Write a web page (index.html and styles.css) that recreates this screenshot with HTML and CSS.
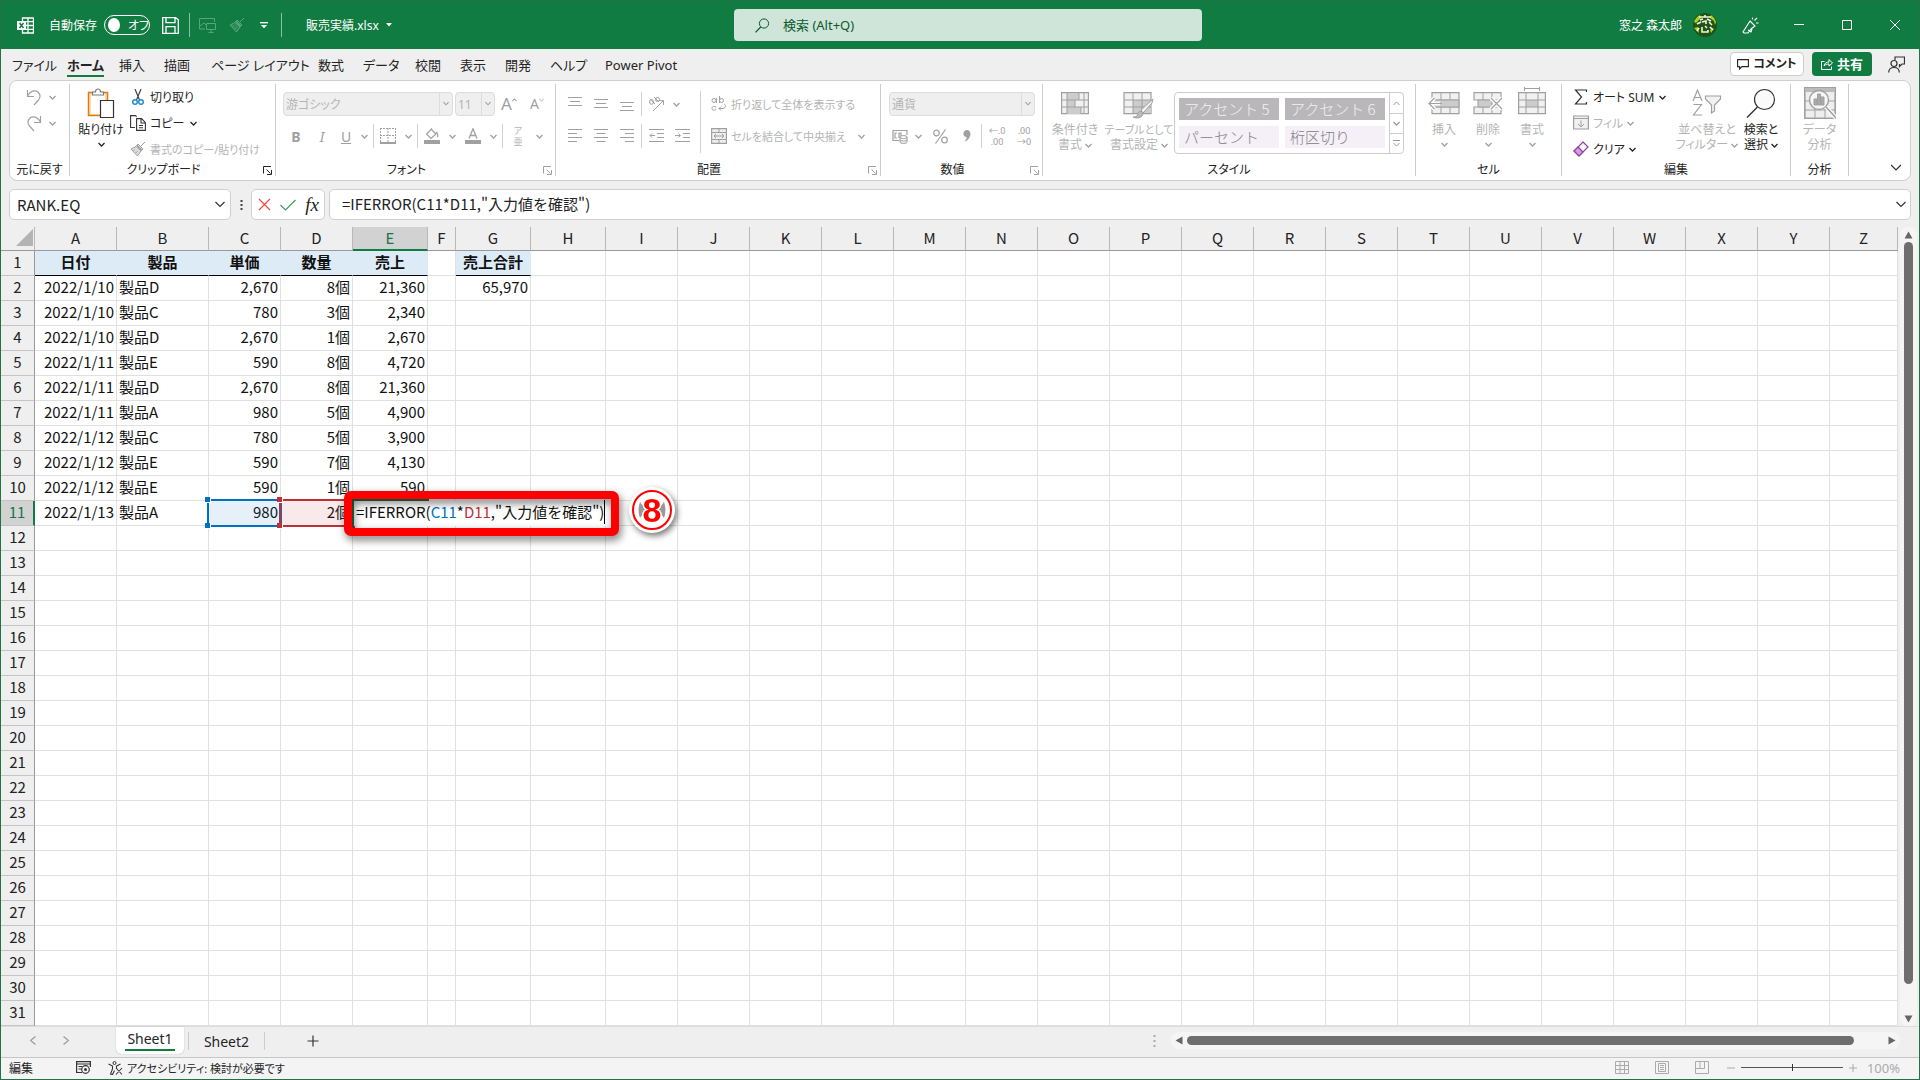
FILE: index.html
```html
<!DOCTYPE html>
<html lang="ja">
<head>
<meta charset="utf-8">
<title>販売実績.xlsx - Excel</title>
<link rel="stylesheet" href="styles.css">
</head>
<body>
<svg class="defs" aria-hidden="true">
  <symbol id="chev" viewBox="0 0 7 5"><path d="M.5 1l3 3 3-3" fill="none" stroke="currentColor" stroke-width="1.3"/></symbol>
  <symbol id="launch" viewBox="0 0 9 9"><path d="M.5 7.500V.5H8M3.500 3.500l4 4M8.500 4v4.500H4" fill="none" stroke="currentColor"/></symbol>
  <symbol id="brush" viewBox="0 0 16 16"><path d="M15 1l-4.500 4.500M7 4l5 5M8 3l5 5-1.500 1.500-5-5zM6 5.500L1 8l6.500 7 3.500-5z" fill="currentColor" fill-opacity=".35" stroke="currentColor"/><path d="M3.500 9.500l1.500-.5M5.500 12l2-1.500" stroke="currentColor"/></symbol>
</svg>

<header class="titlebar">
  <div class="quick">
    <svg class="logo" width="17" height="17" viewBox="0 0 17 17"><path d="M5.500 4V1h11v15h-11v-3M11 1v15M5.500 4.700h11M9 8.500h7.500M5.500 12.300h11" fill="none" stroke="#fff" stroke-width="1.300"/><path d="M0 4h9v9H0z" fill="#fff"/><path d="M2.500 6l4 5M6.500 6l-4 5" stroke="#107c41" stroke-width="1.500"/></svg>
    <label class="autosave"><span>自動保存</span><input type="checkbox" role="switch"><span class="switch"><i></i>オフ</span></label>
    <button class="tb save" aria-label="上書き保存"><svg width="17" height="17" viewBox="0 0 17 17"><path d="M.7.7h13l2.600 2v13.600H.7zM4 .7v5h9v-5M4 16V9.700h9V16" fill="none" stroke="#fff" stroke-width="1.300"/></svg></button>
    <i class="vline"></i>
    <button class="tb dim" aria-label="画面"><svg width="17" height="15" viewBox="0 0 17 15"><path d="M6 11H.5V.5h15V4M1 8l4-3 3 3M7.500 5.500h9v6h-9zM12 11.500v3M9.500 14.500h5" fill="none" stroke="currentColor"/></svg></button>
    <button class="tb dim" aria-label="書式のコピー"><svg width="16" height="16"><use href="#brush"/></svg></button>
    <button class="tb more" aria-label="クイック アクセスのカスタマイズ"><svg width="8" height="7" viewBox="0 0 8 7"><path d="M0 .7h8" stroke="#fff" stroke-width="1.300"/><path d="M.8 3h6.400L4 6.300z" fill="#fff"/></svg></button>
    <i class="vline"></i>
    <button class="filename">販売実績.xlsx <svg width="6" height="4" viewBox="0 0 6 4"><path d="M0 0h6L3 3.500z" fill="#fff"/></svg></button>
  </div>
  <label class="search">
    <svg width="15" height="15" viewBox="0 0 15 15"><circle cx="9" cy="5.500" r="4.600" fill="none" stroke="#0b5a2d"/><path d="M5.700 9L.5 14.300" stroke="#0b5a2d" stroke-width="1.200"/></svg>
    <input type="text" placeholder="検索 (Alt+Q)" aria-label="検索">
  </label>
  <div class="account">
    <span>窓之 森太郎</span>
    <svg class="avatar" width="24" height="24" viewBox="0 0 24 24"><circle cx="12" cy="12" r="12" fill="#1f5416"/><path d="M1 9a12 12 0 016-7l1 3-5 5zM23 9a12 12 0 00-5-7l-1 3 4 3 1 4zM1 15l4-1 1 6zM18 20l-1-3 4-2z" fill="#a4d320"/><path d="M6 4h12M12 2v2M7 7l3-1M14 6l4 2M4 11l4-2M9 9l4-1v3M16 9l3 3M6 15l-2 3M9 14v5h6v-2M12 13l2 2M17 14l3 3" fill="none" stroke="#f2f6dc" stroke-width="1.600"/></svg>
    <button class="wb pen" aria-label="新機能"><svg width="17" height="17" viewBox="0 0 17 17"><path d="M8 4l5 5-4 3-3 4H2l-1-1zM12.500 3.500L15 1M10.500 2.500V.5M14 6h2.500M6 13l3 2 1-3" fill="none" stroke="#fff" stroke-width="1.100"/></svg></button>
    <button class="wb" aria-label="最小化"><svg width="10" height="10"><path d="M0 4.500h10" stroke="#fff"/></svg></button>
    <button class="wb" aria-label="最大化"><svg width="10" height="10"><path d="M.5.500h9v9h-9z" fill="none" stroke="#fff"/></svg></button>
    <button class="wb" aria-label="閉じる"><svg width="10" height="10"><path d="M0 0l10 10M10 0L0 10" stroke="#fff"/></svg></button>
  </div>
</header>

<nav class="tabs">
  <a class="t55" href="#">ファイル</a><a class="t52 on" href="#"><b>ホーム</b></a><a class="t45" href="#">挿入</a><a class="t47" href="#">描画</a><a class="t107" href="#">ページ レイアウト</a><a class="t45" href="#">数式</a><a class="t52" href="#">データ</a><a class="t45" href="#">校閲</a><a class="t45" href="#">表示</a><a class="t45" href="#">開発</a><a class="t55" href="#">ヘルプ</a><a href="#">Power Pivot</a>
  <div class="tabs-right">
    <button class="comment"><svg width="12" height="11" viewBox="0 0 12 11"><path d="M.6.600h10.800v7H5L2.600 10V7.600h-2z" fill="none" stroke="#242424" stroke-width="1.100"/></svg>コメント</button>
    <button class="share"><svg width="12" height="12" viewBox="0 0 12 12"><path d="M3.500 3.500h-3v8h10v-3M3 8c.5-3 2.500-4 5-4V1.500L11.500 5 8 8V6C6 6 4.500 6.500 3 8z" fill="none" stroke="#fff"/></svg>共有</button>
    <button class="plain" aria-label="フィードバック"><svg width="17" height="17" viewBox="0 0 17 17"><path d="M7 4V1h9.500v7H14l-2.500 2.500V8" fill="none" stroke="#333" stroke-width="1.200"/><circle cx="6" cy="7.500" r="3" fill="none" stroke="#333" stroke-width="1.200"/><path d="M.7 16.500c0-3 2-5 5.300-5s5.300 2 5.300 5" fill="none" stroke="#333" stroke-width="1.200"/></svg></button>
  </div>
</nav>

<section class="ribbon">
  <div class="group g-undo">
    <div class="body stack">
      <button class="cmd off" aria-label="元に戻す"><svg width="16" height="17" viewBox="0 0 16 17"><path d="M1.500 1v6.500H8M1.500 7C4 2 9 .5 12 3c3 3 2 6 .5 8L8 16" fill="none" stroke="currentColor" stroke-width="1.200"/></svg><svg class="chev" width="7" height="5"><use href="#chev"/></svg></button>
      <button class="cmd off" aria-label="やり直し"><svg width="16" height="17" viewBox="0 0 16 17"><path d="M14.500 1v6.500H8M14.500 7C12 2 7 .5 4 3c-3 3-2 6-.5 8L8 16" fill="none" stroke="currentColor" stroke-width="1.200"/></svg><svg class="chev" width="7" height="5"><use href="#chev"/></svg></button>
    </div>
    <h2>元に戻す</h2>
  </div>

  <div class="group g-clip">
    <div class="body">
      <button class="big paste"><svg width="28" height="32" viewBox="0 0 28 32"><path d="M1.500 5.500h19v23h-19z" fill="#fbe2a5" stroke="#e07b14" stroke-width="1.500"/><path d="M4 7h14v20H4z" fill="#fff"/><path d="M5.500 8V5h3c0-2 1-3 2.500-3s2.500 1 2.500 3h3v3z" fill="#fff" stroke="#7b7b7b" stroke-width="1.200"/><path d="M13.500 13.500h13v17h-13z" fill="#fff" stroke="#333" stroke-width="1.200"/></svg><span>貼り付け</span><svg class="chev" width="7" height="5"><use href="#chev"/></svg></button>
      <div class="stack">
        <button class="cmd"><svg width="16" height="16" viewBox="0 0 16 16"><path d="M5 0l4.500 11M11 0L6.500 11" stroke="#444" stroke-width="1.200"/><circle cx="5" cy="13" r="2.300" fill="none" stroke="#1e8bcd" stroke-width="1.400"/><circle cx="11" cy="13" r="2.300" fill="none" stroke="#1e8bcd" stroke-width="1.400"/></svg>切り取り</button>
        <button class="cmd"><svg width="16" height="16" viewBox="0 0 16 16"><path d="M5 12.500H.6V.6h5l1 1M6.600 3.600h5l3.800 4v7.800H6.600zM11 4v4h4M9 10.500h4M9 12.800h4" fill="none" stroke="#333" stroke-width="1.100"/></svg><span class="w36">コピー</span><svg class="chev" width="7" height="5"><use href="#chev"/></svg></button>
        <button class="cmd off small"><svg width="16" height="16"><use href="#brush"/></svg>書式のコピー/貼り付け</button>
      </div>
    </div>
    <h2>クリップボード</h2><svg class="launch" width="9" height="9"><use href="#launch"/></svg>
  </div>

  <div class="group g-font off">
    <div class="body rows">
      <div class="row">
        <label class="combo c170"><select disabled aria-label="フォント"><option>游ゴシック</option></select><svg class="chev" width="7" height="5"><use href="#chev"/></svg></label>
        <label class="combo c40"><select disabled aria-label="サイズ"><option>11</option></select><svg class="chev" width="7" height="5"><use href="#chev"/></svg></label>
        <button class="b28 big-a">A<svg width="5" height="4" viewBox="0 0 7 5"><path d="M.5 4l3-3 3 3" fill="none" stroke="currentColor" stroke-width="1.500"/></svg></button>
        <button class="b28 small-a">A<svg width="5" height="4"><use href="#chev"/></svg></button>
      </div>
      <div class="row">
        <button class="b26"><b>B</b></button><button class="b26"><em>I</em></button><button class="b22"><u>U</u></button><button class="b15"><svg width="7" height="5"><use href="#chev"/></svg></button><i class="sep"></i>
        <button class="b26"><svg width="16" height="16" viewBox="0 0 16 16"><path d="M.5 0v15M8 0v15M15.500 0v15M0 .5h16M0 7.500h16" stroke="currentColor" stroke-dasharray="2 1"/><path d="M0 15h16" stroke="currentColor" stroke-width="2"/></svg></button><button class="b15"><svg width="7" height="5"><use href="#chev"/></svg></button><i class="sep"></i>
        <button class="b26"><svg width="16" height="16" viewBox="0 0 16 16"><path d="M8 .5L2.500 6 7 10.500 12 6 7 1M12 4c2 1 2 3 1.500 5" fill="none" stroke="currentColor" stroke-width="1.200"/><path d="M0 12h16v4H0z" fill="currentColor"/></svg></button><button class="b15"><svg width="7" height="5"><use href="#chev"/></svg></button>
        <button class="b26"><svg width="16" height="16" viewBox="0 0 16 16"><path d="M4 10.500L8 .8l4 9.700M5.300 7.500h5.400" fill="none" stroke="currentColor" stroke-width="1.300"/><path d="M0 12h16v4H0z" fill="currentColor"/></svg></button><button class="b15"><svg width="7" height="5"><use href="#chev"/></svg></button><i class="sep"></i>
        <button class="b28 ruby"><span>ア</span><span>亜</span></button><button class="b15"><svg width="7" height="5"><use href="#chev"/></svg></button>
      </div>
    </div>
    <h2>フォント</h2><svg class="launch" width="9" height="9"><use href="#launch"/></svg>
  </div>

  <div class="group g-align off">
    <div class="body">
      <div class="rows">
        <div class="row">
          <button class="b26"><svg width="14" height="16" viewBox="0 0 14 16"><path d="M0 1.500h14M2 5.500h10M0 9.500h14" stroke="currentColor"/></svg></button><button class="b26"><svg width="14" height="16" viewBox="0 0 14 16"><path d="M0 3.500h14M2 7.500h10M0 11.500h14" stroke="currentColor"/></svg></button><button class="b26"><svg width="14" height="16" viewBox="0 0 14 16"><path d="M0 6.500h14M2 10.500h10M0 14.500h14" stroke="currentColor"/></svg></button><i class="sep"></i>
          <button class="b26"><svg width="16" height="16" viewBox="0 0 16 16"><path d="M5 15L15 5M11 4.500h4.500V9" fill="none" stroke="currentColor"/><ellipse cx="3.500" cy="6" rx="2" ry="2.300" fill="none" stroke="currentColor"/><path d="M2.500 3L7 8M6 1l5 5" stroke="currentColor"/><circle cx="9.500" cy="3.500" r="2" fill="none" stroke="currentColor"/></svg></button><button class="b15"><svg width="7" height="5"><use href="#chev"/></svg></button>
        </div>
        <div class="row">
          <button class="b26"><svg width="14" height="14" viewBox="0 0 14 14"><path d="M0 .5h14M0 4.500h9M0 8.500h14M0 12.500h9" stroke="currentColor"/></svg></button><button class="b26"><svg width="14" height="14" viewBox="0 0 14 14"><path d="M0 .5h14M2.500 4.500h9M0 8.500h14M2.500 12.500h9" stroke="currentColor"/></svg></button><button class="b26"><svg width="14" height="14" viewBox="0 0 14 14"><path d="M0 .5h14M5 4.500h9M0 8.500h14M5 12.500h9" stroke="currentColor"/></svg></button><i class="sep"></i>
          <button class="b26"><svg width="15" height="14" viewBox="0 0 15 14"><path d="M0 .5h15M8 4.500h7M8 8.500h7M0 12.500h15M6 6.500H1M3 4.500l-2 2 2 2" fill="none" stroke="currentColor"/></svg></button><button class="b26"><svg width="15" height="14" viewBox="0 0 15 14"><path d="M0 .5h15M8 4.500h7M8 8.500h7M0 12.500h15M0 6.500h5M3.500 4.500l2 2-2 2" fill="none" stroke="currentColor"/></svg></button>
        </div>
      </div>
      <i class="tall"></i>
      <div class="rows">
        <button class="row wide"><svg width="16" height="16" viewBox="0 0 16 16"><circle cx="3" cy="4.500" r="2" fill="none" stroke="currentColor"/><path d="M5.500 2v5M8.500 0v7M5 11c-3-1.500-4 0-4 1.500s1.500 2.500 4 1M13 8c2 1 2 4-1 4.500H8M10 10.500l-2 2 2 2" fill="none" stroke="currentColor"/><circle cx="10.500" cy="4.500" r="2" fill="none" stroke="currentColor"/></svg><span>折り返して全体を表示する</span></button>
        <button class="row wide"><svg width="16" height="16" viewBox="0 0 16 16"><path d="M.5.5h15v15H.5z" fill="#eee" stroke="currentColor" stroke-width="1.300"/><path d="M1 4.500h14M1 11.500h14M8 1v3M8 12v3M3 8h10M5 6L3 8l2 2M11 6l2 2-2 2" fill="none" stroke="currentColor"/></svg><span>セルを結合して中央揃え</span><svg class="chev" width="7" height="5"><use href="#chev"/></svg></button>
      </div>
    </div>
    <h2>配置</h2><svg class="launch" width="9" height="9"><use href="#launch"/></svg>
  </div>

  <div class="group g-num off">
    <div class="body rows">
      <div class="row"><label class="combo c146"><select disabled aria-label="表示形式"><option>通貨</option></select><svg class="chev" width="7" height="5"><use href="#chev"/></svg></label></div>
      <div class="row">
        <button class="b22"><svg width="17" height="15" viewBox="0 0 17 15"><path d="M7 11.500H1v-10h14V6M5 4H3v5h2M7 9V4h2v3" fill="none" stroke="currentColor" stroke-width="1.200"/><path d="M8 8c0-2 7-2 7 0v5c0 2-7 2-7 0zM8 8c0 2 7 2 7 0M8 10.500c0 2 7 2 7 0" fill="#eee" stroke="currentColor"/></svg></button><button class="b15"><svg width="7" height="5"><use href="#chev"/></svg></button>
        <button class="b28"><svg width="15" height="15" viewBox="0 0 15 15"><path d="M12.500.5L2.500 14.500" stroke="currentColor" stroke-width="1.200"/><circle cx="3.500" cy="4" r="2.800" fill="none" stroke="currentColor" stroke-width="1.200"/><circle cx="11.500" cy="11" r="2.800" fill="none" stroke="currentColor" stroke-width="1.200"/></svg></button>
        <button class="b26"><svg width="8" height="12" viewBox="0 0 8 12"><path d="M4 0c5 0 5 9-3 12 2-2 3-4 2.500-5C-1 7-.5 0 4 0z" fill="currentColor"/></svg></button><i class="sep"></i>
        <button class="b28 dec"><span>←.0</span><span>.00</span></button><button class="b26 dec"><span>.00</span><span>→0</span></button>
      </div>
    </div>
    <h2>数値</h2><svg class="launch" width="9" height="9"><use href="#launch"/></svg>
  </div>

  <div class="group g-style">
    <div class="body">
      <button class="big off b64"><svg width="28" height="32" viewBox="0 0 28 32"><path d="M.6 5.600h26.800v21H.6z" fill="#f1f1f1" stroke="currentColor" stroke-width="1.200"/><path d="M6 6h12v7H6zM6 13h8v7H6zM6 20h14v7H6z" fill="#ccc"/><path d="M6 6v21M18 6v7M14 13v7M20 20v7M23 6v21M1 13h26M1 20h26" stroke="currentColor"/></svg><span>条件付き</span><span>書式 <svg class="chev" width="7" height="5"><use href="#chev"/></svg></span></button>
      <button class="big off b64"><svg width="32" height="32" viewBox="0 0 32 32"><path d="M1 5.600h27v21H1z" fill="#f1f1f1" stroke="currentColor" stroke-width="1.200"/><path d="M10 13h18v13H10z" fill="#ccc"/><path d="M10 6v21M19 6v21M1 13h27M1 20h27" stroke="currentColor"/><path d="M30 12L18 23l2 3 9-10z" fill="#f4f4f4" stroke="currentColor"/><path d="M18 24c-3 0-3 3-4 5-1 1-3 1-4 1 4 2 10 1 10-4z" fill="#bbb" stroke="currentColor"/></svg><span class="small">テーブルとして</span><span>書式設定 <svg class="chev" width="7" height="5"><use href="#chev"/></svg></span></button>
      <div class="gallery">
        <div class="swatches"><button class="dark">アクセント 5</button><button class="dark">アクセント 6</button><button class="pale">パーセント</button><button class="pale">桁区切り</button></div>
        <div class="gscroll"><button aria-label="前"><svg width="7" height="5" viewBox="0 0 7 5"><path d="M.5 4l3-3 3 3" fill="none" stroke="currentColor"/></svg></button><button aria-label="次"><svg width="7" height="5"><use href="#chev"/></svg></button><button aria-label="その他"><svg width="7" height="7" viewBox="0 0 7 7"><path d="M0 .5h7M.5 3l3 3 3-3" fill="none" stroke="currentColor"/></svg></button></div>
      </div>
    </div>
    <h2>スタイル</h2>
  </div>

  <div class="group g-cell">
    <div class="body">
      <button class="big off b44"><svg width="32" height="32" viewBox="0 0 32 32"><path d="M4 5.600h27v21H4z" fill="#f1f1f1" stroke="currentColor" stroke-width="1.200"/><path d="M4 13h27M4 20h27M13 6v21M22 6v21" stroke="currentColor"/><path d="M2 13h29v7H2z" fill="#ccc" stroke="currentColor"/><path d="M12 16.500H2M6.500 11L1 16.500 6.500 22" fill="none" stroke="#fff" stroke-width="4"/><path d="M14 16.500H1M6.500 11L1 16.500 6.500 22" fill="none" stroke="currentColor" stroke-width="1.200"/></svg><span>挿入</span><svg class="chev" width="7" height="5"><use href="#chev"/></svg></button>
      <button class="big off b44"><svg width="30" height="32" viewBox="0 0 30 32"><path d="M1 5.600h27V13H1zM1 20h27v6.600H1z" fill="#f1f1f1" stroke="currentColor" stroke-width="1.200"/><path d="M10 6v21M19 6v21" stroke="currentColor"/><path d="M5 13h14v7H5z" fill="#ccc" stroke="currentColor"/><path d="M18 11l11 11M29 11L18 22" stroke="#fff" stroke-width="4"/><path d="M18 11l11 11M29 11L18 22" stroke="currentColor" stroke-width="1.200"/></svg><span>削除</span><svg class="chev" width="7" height="5"><use href="#chev"/></svg></button>
      <button class="big off b44"><svg width="28" height="32" viewBox="0 0 28 32"><path d="M.6 5.600h26.800v21H.6z" fill="#f1f1f1" stroke="currentColor" stroke-width="1.200"/><path d="M8 13h12v7H8z" fill="#ccc"/><path d="M8 6v21M20 6v21M1 13h26M1 20h26M6.500 0v4M21.500 0v4M7 1.500h14" stroke="currentColor"/></svg><span>書式</span><svg class="chev" width="7" height="5"><use href="#chev"/></svg></button>
    </div>
    <h2>セル</h2>
  </div>

  <div class="group g-edit">
    <div class="body">
      <div class="stack">
        <button class="cmd"><svg width="16" height="16" viewBox="0 0 16 16"><path d="M13.500 3V1H2.500l6 7-6 7h11v-2" fill="none" stroke="#333" stroke-width="1.200"/></svg><span class="w70">オート SUM</span><svg class="chev" width="7" height="5"><use href="#chev"/></svg></button>
        <button class="cmd off"><svg width="16" height="16" viewBox="0 0 16 16"><path d="M.6 1h14.800v13H.6z" fill="#f1f1f1" stroke="currentColor" stroke-width="1.200"/><path d="M1 3.500h14M8 5.500v6M5 9l3 3 3-3" fill="none" stroke="currentColor"/></svg>フィル<svg class="chev" width="7" height="5"><use href="#chev"/></svg></button>
        <button class="cmd"><svg width="16" height="16" viewBox="0 0 16 16"><path d="M10 1l5 5-9 9-5-5z" fill="#fff" stroke="#8f3fa0" stroke-width="1.200"/><path d="M5 6l5 5-4 4-5-5z" fill="#d69be0" stroke="#8f3fa0" stroke-width="1.200"/></svg><span class="clear">クリア</span><svg class="chev" width="7" height="5"><use href="#chev"/></svg></button>
      </div>
      <button class="big off b58"><svg width="30" height="32" viewBox="0 0 30 32"><path d="M1 14L5.500 3 10 14M2.500 10.500h6M1.500 17.500h8L1.500 28h8.500" fill="none" stroke="currentColor" stroke-width="1.200"/><path d="M13.500 9h15v3l-6 6v6l-3 2v-8l-6-6z" fill="#f1f1f1" stroke="currentColor" stroke-width="1.200"/></svg><span>並べ替えと</span><span>フィルター <svg class="chev" width="7" height="5"><use href="#chev"/></svg></span></button>
      <button class="big b50"><svg width="30" height="32" viewBox="0 0 30 32"><circle cx="18.500" cy="12.500" r="10" fill="#fafafa" stroke="#333" stroke-width="1.200"/><path d="M11.500 20L1 30.500" stroke="#333" stroke-width="1.500"/></svg><span>検索と</span><span>選択 <svg class="chev" width="7" height="5"><use href="#chev"/></svg></span></button>
    </div>
    <h2>編集</h2>
  </div>

  <div class="group g-data">
    <div class="body">
      <button class="big off b57"><svg width="32" height="32" viewBox="0 0 32 32"><path d="M.8.800h30.400v30.400H.8z" fill="#eee" stroke="currentColor" stroke-width="1.600"/><path d="M1 1h30v4H1z" fill="#bbb"/><path d="M1 14h30M1 23h30M11 22v9M21 22v9" stroke="currentColor"/><circle cx="15" cy="13" r="9.500" fill="#f6f6f6" stroke="currentColor" stroke-width="1.400"/><path d="M10 12h3v6h-3zM13.500 7h3v11h-3zM17 10h3v8h-3z" fill="#aaa" stroke="currentColor"/><path d="M22 20l10 11" stroke="#fff" stroke-width="4"/><path d="M22 20l10 11" stroke="currentColor" stroke-width="1.600"/></svg><span>データ</span><span>分析</span></button>
    </div>
    <h2>分析</h2>
  </div>
  <button class="collapse" aria-label="リボンを折りたたむ"><svg width="10" height="7" viewBox="0 0 7 5"><path d="M0 .7l3.500 3.500L7 .7" fill="none" stroke="#333" stroke-width=".9"/></svg></button>
</section>

<section class="formulabar">
  <div class="namebox"><input type="text" value="RANK.EQ" aria-label="名前ボックス"><svg width="10" height="7" viewBox="0 0 10 7"><path d="M.5 1L5 5.500 9.500 1" fill="none" stroke="#333" stroke-width="1.200"/></svg></div>
  <svg class="dots" width="3" height="12"><path d="M1.500 1v11" stroke="#444" stroke-width="2" stroke-dasharray="2 2"/></svg>
  <div class="fx"><button aria-label="キャンセル"><svg width="13" height="13"><path d="M1 1l11 11M12 1L1 12" stroke="#ee4a44" stroke-width="1.200"/></svg></button><button aria-label="入力"><svg width="16" height="12"><path d="M.5 6L5.500 11 15.500 1" fill="none" stroke="#3f9a5b" stroke-width="1.200"/></svg></button><button class="fxb" aria-label="関数の挿入"><em>fx</em></button></div>
  <div class="formula"><input type="text" value="=IFERROR(C11*D11,&quot;入力値を確認&quot;)" aria-label="数式バー"><svg width="10" height="7" viewBox="0 0 10 7"><path d="M.5 1L5 5.500 9.500 1" fill="none" stroke="#333" stroke-width="1.200"/></svg></div>
</section>

<main class="sheet">
  <div class="viewport"><table class="grid" id="grid"></table></div>
  <div class="vscroll"><svg width="11" height="8"><path d="M1.500 7.500L5.500.500l4 7z" fill="#666"/></svg><i></i><svg width="11" height="8"><path d="M1.500.500L5.500 7.500l4-7z" fill="#666"/></svg></div>
</main>

<footer>
  <div class="sheetbar">
    <button class="nav" aria-label="前のシート"><svg width="6" height="9"><path d="M5.500.500l-5 4 5 4" fill="none" stroke="#999" stroke-width="1.200"/></svg></button>
    <button class="nav" aria-label="次のシート"><svg width="6" height="9"><path d="M.5.500l5 4-5 4" fill="none" stroke="#999" stroke-width="1.200"/></svg></button>
    <a class="stab active" href="#"><span>Sheet1</span></a>
    <a class="stab" href="#">Sheet2</a>
    <button class="add" aria-label="新しいシート"><svg width="12" height="12"><path d="M6 .5v11M.5 6h11" stroke="#333" stroke-width="1.200"/></svg></button>
    <svg class="grip" width="3" height="12"><path d="M1.500 0v12" stroke="#aaa" stroke-width="2" stroke-dasharray="2 3"/></svg>
    <div class="hscroll"><svg width="8" height="11"><path d="M7.500 1.500L.5 5.500l7 4z" fill="#666"/></svg><i></i><svg width="8" height="11"><path d="M.5 1.500l7 4-7 4z" fill="#666"/></svg></div>
  </div>
  <div class="status">
    <span class="mode">編集</span>
    <svg width="15" height="13" viewBox="0 0 15 13"><path d="M6 11.500H.6V.6h13.800V6M.6 3h13.800M2.500 5.500h4M2.500 8h3" fill="none" stroke="#333" stroke-width="1.200"/><circle cx="9.500" cy="8.500" r="3.800" fill="none" stroke="#333" stroke-width="1.200"/><circle cx="9.500" cy="8.500" r="1.500" fill="#333"/></svg>
    <button class="access"><svg width="15" height="14" viewBox="0 0 15 14"><circle cx="6.500" cy="2" r="1.500" fill="none" stroke="#333"/><path d="M.5 3l4 2v3l-2 5 2 .5 2-4M12.500 3l-4 2v3M8 7l6 6.500M14 7l-6 6.500" fill="none" stroke="#333" stroke-width="1.100"/></svg>アクセシビリティ: 検討が必要です</button>
    <div class="views">
      <button aria-label="標準"><svg width="14" height="13"><path d="M.5.500h13v12H.5zM5 .5v12M9.500.500v12M.5 4.500h13M.5 8.500h13" fill="none" stroke="#aaa"/></svg></button>
      <button aria-label="ページ レイアウト"><svg width="14" height="13"><path d="M.5.500h13v12H.5zM3.500 2.500h7v8h-7zM5 4.500h4M5 6.500h4M5 8.500h4" fill="none" stroke="#aaa"/></svg></button>
      <button aria-label="改ページ"><svg width="14" height="13"><path d="M.5.500h13v12H.5zM.5 7.500h9v-7M5 .5v7" fill="none" stroke="#aaa"/></svg></button>
    </div>
    <button class="zoombtn" aria-label="縮小"><svg width="8" height="8"><path d="M0 4h8" stroke="#aaa"/></svg></button>
    <input class="zoom" type="range" min="0" max="100" value="50" aria-label="ズーム">
    <button class="zoombtn" aria-label="拡大"><svg width="8" height="8"><path d="M0 4h8M4 0v8" stroke="#aaa"/></svg></button>
    <span class="pctv">100%</span>
  </div>
</footer>
<script src="script.js"></script>
</body>
</html>
```
FILE: styles.css
```css
* { box-sizing: border-box; }
html, body { height: 100%; }
body {
  margin: 0; display: flex; flex-direction: column; overflow: hidden;
  background: #efefef; color: #242424;
  border: 1px solid #217346; border-top-width: 0;
  font-family: "Noto Sans", "Noto Sans CJK JP", sans-serif; font-size: 12px;
}
button, input, select { font: inherit; color: inherit; border: 0; background: none; padding: 0; margin: 0; font-feature-settings: inherit; }
button { display: flex; align-items: center; justify-content: center; white-space: nowrap; }
a { color: inherit; text-decoration: none; }
svg { flex: none; display: block; }
.defs { position: absolute; width: 0; height: 0; }
.titlebar, .tabs, .ribbon, .status { font-feature-settings: "palt"; }

/* title bar */
.titlebar { display: grid; grid-template-columns: minmax(0, 1fr) 484px minmax(0, 1fr); align-items: center; height: 49px; flex: none; background: #107c41; color: #fff; border-top: 1px solid #217346; }
.quick, .account { display: flex; align-items: center; }
.quick { padding-left: 16px; white-space: nowrap; }
.autosave { display: flex; align-items: center; gap: 7px; margin-left: 15px; }
.autosave input { position: absolute; opacity: 0; }
.switch { display: flex; align-items: center; gap: 8px; width: 46px; height: 20px; padding-left: 3px; border: 1px solid #fff; border-radius: 10px; }
.switch i { width: 14px; height: 14px; border-radius: 50%; background: #fff; }
.tb { width: 30px; height: 30px; }
.save { margin: 0 4px 0 5px; }
.more { width: 24px; }
.dim { color: #58a57a; }
.vline { width: 1px; height: 24px; background: #8cc0a2; }
.vline + .dim { margin-left: 2px; }
.tb + .vline { margin-left: 5px; }
.save + .vline { margin-left: 0; }
.filename { gap: 7px; margin-left: 24px; }
.search { display: flex; align-items: center; gap: 13px; height: 32px; margin-left: 16px; padding-left: 21px; border-radius: 4px; background: #cfe5d9; }
.search input { flex: 1; min-width: 0; outline: 0; font-size: 13px; }
.search input::placeholder { color: #0b5a2d; opacity: 1; }
.account { justify-content: flex-end; }
.avatar { margin: 0 8px 0 11px; }
.wb { width: 48px; height: 40px; }
.pen { width: 50px; }

/* ribbon tabs */
.tabs { display: flex; align-items: flex-start; height: 31px; flex: none; padding-left: 11px; font-size: 13px; line-height: 26px; }
.tabs a { padding-top: 3px; white-space: nowrap; }
.on b { display: inline-block; height: 25px; border-bottom: 2px solid #107c41; }
.t45 { width: 45px; } .t47 { width: 47px; } .t52 { width: 52px; } .t55 { width: 55px; } .t107 { width: 107px; }
.tabs-right { display: flex; align-items: center; gap: 8px; margin: 3px 7px 0 auto; line-height: 20px; font-weight: 700; }
.comment, .share { height: 24px; border-radius: 4px; font-weight: 700; gap: 4px; font-size: 12px; }
.comment { width: 74px; border: 1px solid #ccc; background: #fff; }
.share { width: 60px; background: #107c41; color: #fff; font-size: 13px; }
.plain { width: 32px; }

/* ribbon */
.ribbon { display: flex; flex: none; height: 101px; margin: 0 8px; background: #fff; border: 1px solid #cfcfcf; border-radius: 8px; overflow: hidden; }
.group { position: relative; flex: none; margin: 3px 0 4px; border-right: 1px solid #ccc; }
.body { display: flex; height: 79px; }
.group h2 { margin: 0; font-size: 12px; font-weight: 400; line-height: 14px; text-align: center; color: #242424; white-space: nowrap; }
.g-clip h2, .g-font h2, .g-align h2, .g-num h2 { padding-right: 18px; }
.launch { position: absolute; right: 3px; bottom: 1px; }
.off { color: #a0a0a0; }
.off span, .cmd.off, .off select { color: #b4b4b4; }
.off.cmd svg, .off span .chev { color: #a0a0a0; }
.small { font-size: 11px; }
.stack { display: flex; flex-direction: column; }
.cmd { display: flex; align-items: center; justify-content: flex-start; gap: 4px; height: 26px; white-space: nowrap; }
.w36 { width: 36px; text-align: left; } .w70 { width: 70px; text-align: left; }
.big { flex-direction: column; justify-content: flex-start; padding-top: 3px; line-height: 15px; }
.big > svg:first-child { margin-bottom: 3px; }
.big span .chev { display: inline-block; vertical-align: middle; }
.big > .chev { margin-top: 5px; }
.b44 { width: 44px; } .b50 { width: 50px; } .b57 { width: 57px; } .b58 { width: 58px; } .b64 { width: 64px; }
.rows { display: flex; flex-direction: column; gap: 8px; padding-top: 8px; }
.row { display: flex; align-items: center; height: 24px; }
.b15 { width: 15px; } .b22 { width: 22px; } .b26 { width: 26px; } .b28 { width: 28px; }
.row button { height: 24px; flex: none; font-size: 14px; }
.row .sep { width: 1px; height: 24px; margin: 0 1px; background: #d0d0d0; flex: none; }
.tall { width: 1px; height: 62px; margin: 7px 10px 0 5px; background: #d0d0d0; }
.row.wide { justify-content: flex-start; gap: 4px; font-size: 11px; }
.wide .chev { margin-left: 8px; }
.combo { display: flex; height: 24px; border: 1px solid #dcdcdc; border-radius: 4px; background: #efefef; align-items: stretch; }
.combo select { flex: 1; min-width: 0; appearance: none; opacity: 1; padding-left: 2px; }
.combo .chev { width: 13px; height: 22px; padding: 8px 3px 9px; border-left: 1px solid #dcdcdc; }
.c170 { width: 170px; margin-right: 2px; } .c40 { width: 40px; } .c146 { width: 146px; }
.row .big-a, .row .small-a { align-items: flex-start; }
.row .big-a { font-size: 17px; line-height: 24px; } .row .small-a { font-size: 14px; line-height: 24px; }
.big-a svg, .small-a svg { margin-top: 6px; }
.row .ruby, .row .dec { flex-direction: column; font-size: 9px; line-height: 11px; }
.dec span { color: #a0a0a0; }

.g-undo { width: 60px; }
.g-undo .cmd { padding-left: 16px; gap: 7px; }
.g-clip { width: 206px; }
.paste { width: 48px; margin: 0 5px 0 7px; }
.g-font { width: 280px; } .g-font .body { padding-left: 7px; }
.g-align { width: 325px; } .g-align .body { padding-left: 6px; }
.g-num { width: 162px; } .g-num .body { padding-left: 8px; }
.g-style { width: 373px; }
.g-cell { width: 146px; } .g-cell .body { padding-left: 6px; }
.g-edit { width: 229px; } .g-edit .stack { width: 104px; padding-left: 11px; margin-right: 12px; }
.clear { color: #242424; }
.g-data { width: 58px; }
.collapse { margin: 78px 6px 0 auto; width: 16px; height: 16px; }

.gallery { display: flex; width: 230px; height: 62px; margin: 8px 0 0 3px; border: 1px solid #ccc; border-radius: 4px; }
.swatches { display: grid; grid-template-columns: 100px 100px; grid-auto-rows: 22px; gap: 6px; padding: 5px 4px; }
.swatches button { justify-content: flex-start; padding-left: 5px; font-size: 15px; font-weight: 300; line-height: 22px; font-feature-settings: normal; font-family: "Noto Sans CJK JP", sans-serif; }
.swatches .dark { background: #bab7ba; color: #f2f2f2; }
.swatches .pale { background: #f5f0f7; color: #808080; }
.gscroll { display: grid; grid-template-rows: 1fr 1fr 1fr; flex: 1; border-left: 1px solid #ccc; color: #999; }
.gscroll button + button { border-top: 1px solid #ccc; }

/* formula bar */
.formulabar { display: flex; align-items: center; flex: none; padding: 8px 8px 7px; height: 46px; font-family: "Noto Sans CJK JP", sans-serif; font-size: 15px; }
.namebox, .fx, .formula { display: flex; align-items: center; height: 31px; border: 1px solid #d0d0d0; border-radius: 5px; background: #fff; }
.namebox { width: 222px; padding: 0 5px 0 7px; }
.namebox input, .formula input { flex: 1; min-width: 0; outline: 0; color: #222; }
.formula input { padding-bottom: 3px; }
.dots { margin: 0 8px 0 9px; }
.fx { width: 74px; }
.fx button { flex: 1; height: 29px; }
.fx .fxb { font: 400 19px "Liberation Serif", serif; color: #222; }
.formula { flex: 1; margin-left: 4px; padding: 0 4px 0 12px; }

/* worksheet */
.sheet { display: flex; flex: 1; min-height: 0; }
.viewport { flex: 1; min-width: 0; overflow: hidden; background: #fff; }
.grid { width: 100%; table-layout: fixed; border-spacing: 0; font-family: "Noto Sans CJK JP", sans-serif; font-size: 15px; line-height: 22px; color: #111; }
.grid th, .grid td { height: 25px; padding: 0 2px 2px; border: solid #e0e0e0; border-width: 0 1px 1px 0; white-space: nowrap; }
.grid th { font-weight: 400; text-align: center; background: #efefef; color: #222; }
.grid thead th { height: 24px; line-height: 20px; border-color: #ababab #b8b8b8 #999; }
.grid tbody th { border-color: #c4c4c4 #999 #c4c4c4; }
.c-row { width: 34px; } .c-a { width: 82px; } .c-b { width: 92px; } .c-72 { width: 72px; } .c-75 { width: 75px; } .c-f { width: 28px; }
.corner svg { margin-left: 13px; }
.grid thead th.sel { background: #d2d2d2; color: #217346; border-bottom: 2px solid #107c41; padding-bottom: 1px; }
.grid tbody th.sel { background: #d2d2d2; color: #217346; border-right: 2px solid #107c41; }
.grid td.num { text-align: right; }
.grid td.head { background: #ddebf7; border-right-color: #ddebf7; border-bottom-color: #000; text-align: center; font-weight: 700; }
.grid td.rel { position: relative; }
.ref { position: absolute; left: -2px; right: -2px; top: -2px; bottom: -2px; border: 2px solid #0070c0; background: #0070c01a; }
.ref.red { border-color: #be3036; background: #be30361a; }
.ref i { position: absolute; width: 6px; height: 6px; background: #0070c0; border: solid #fff; border-width: 0 1px 1px 0; }
.ref.red i { background: #be3036; }
.ref i:nth-child(1) { left: -4px; top: -4px; } .ref i:nth-child(2) { right: -4px; top: -4px; }
.ref i:nth-child(3) { left: -4px; bottom: -4px; } .ref i:nth-child(4) { right: -4px; bottom: -4px; }
.editor { position: absolute; z-index: 2; left: -1px; top: -1px; width: 260px; height: 26px; padding-left: 2px; line-height: 24px; background: #fff; border-left: 2px solid #217346; text-align: left; }
.editor::before { content: ""; position: absolute; left: -2px; top: -1px; width: 77px; height: 27px; border: solid #217346; border-width: 2px 0; }
.editor .r1 { color: #0070c0; } .editor .r2 { color: #be3036; }
.editor .caret { display: inline-block; width: 1px; height: 24px; background: #000; vertical-align: top; }
.callout { position: absolute; z-index: 3; left: -9px; top: -10px; width: 275px; height: 45px; border: 8px solid #f00; border-radius: 7px; filter: drop-shadow(2px 4px 4px #0008); }
.badge { position: absolute; z-index: 3; left: 276px; top: -14px; width: 46px; height: 46px; filter: drop-shadow(2px 3px 3px #0008); }

.vscroll { display: flex; flex-direction: column; align-items: center; justify-content: space-between; gap: 3px; width: 17px; flex: none; margin: 0 2px 0 2px; padding: 4px 0 3px; border-radius: 8px; background: #f5f5f5; }
.vscroll i { flex: 1; width: 9px; margin-bottom: 28px; border-radius: 5px; background: #6e6e6e; }

/* sheet tabs and status bar */
footer { flex: none; }
.sheetbar { display: flex; height: 31px; align-items: center; border-top: 1px solid #ddd; padding: 0 19px 3px 15px; font-size: 14px; }
.nav { width: 33px; height: 28px; }
.stab { height: 18px; width: 77px; line-height: 20px; text-align: center; border-right: 1px solid #ccc; }
.stab.active { align-self: flex-start; height: 27px; width: 68px; margin: 0 4px 0 34px; padding-top: 2px; border: 0; border-radius: 0 0 5px 5px; background: #fff; box-shadow: 0 0 1px #888; }
.active + .stab { border-left: 1px solid #ccc; }
.active span { display: inline-block; height: 22px; padding: 0 2px; border-bottom: 2px solid #107c41; }
.add { width: 30px; height: 28px; margin-left: 33px; }
.grip { margin-left: auto; margin-right: 15px; }
.hscroll { display: flex; align-items: center; gap: 4px; width: 729px; height: 17px; padding: 0 4px; border-radius: 8px; background: #f5f5f5; }
.hscroll i { flex: 1; height: 9px; margin-right: 30px; border-radius: 5px; background: #6e6e6e; }
.status { display: flex; align-items: center; height: 22px; padding: 0 19px 2px 8px; border-top: 1px solid #c6c6c6; background: #f4f4f4; }
.mode { width: 67px; }
.access { gap: 4px; margin-left: 17px; font-size: 11px; }
.views { display: flex; gap: 26px; margin-left: auto; margin-right: 16px; }
.zoombtn { width: 12px; height: 18px; }
.zoom { appearance: none; width: 102px; height: 12px; margin: 0 4px; background: linear-gradient(#555, #555) center / 100% 1px no-repeat; }
.zoom::-webkit-slider-thumb { appearance: none; width: 1px; height: 7px; background: #333; }
.pctv { margin-left: 7px; width: 34px; text-align: right; color: #aaa; font-size: 13px; }
```
FILE: script.js
```js
const letters = "ABCDEFGHIJKLMNOPQRSTUVWXYZ".split("");
const widths = { A: "c-a", B: "c-b", E: "c-75", F: "c-f", G: "c-75", H: "c-75", Z: "" };
const heads = { A: "日付", B: "製品", C: "単価", D: "数量", E: "売上", G: "売上合計" };
const records = [
  ["2022/1/10", "製品D", "2,670", "8個", "21,360"],
  ["2022/1/10", "製品C", "780", "3個", "2,340"],
  ["2022/1/10", "製品D", "2,670", "1個", "2,670"],
  ["2022/1/11", "製品E", "590", "8個", "4,720"],
  ["2022/1/11", "製品D", "2,670", "8個", "21,360"],
  ["2022/1/11", "製品A", "980", "5個", "4,900"],
  ["2022/1/12", "製品C", "780", "5個", "3,900"],
  ["2022/1/12", "製品E", "590", "7個", "4,130"],
  ["2022/1/12", "製品E", "590", "1個", "590"],
  ["2022/1/13", "製品A", "980", "2個", ""]
];
const handles = "<i></i><i></i><i></i><i></i>";
const extras = {
  C11: `<div class="ref">${handles}</div>`,
  D11: `<div class="ref red">${handles}</div>`,
  E11: `<div class="editor">=IFERROR(<span class="r1">C11</span>*<span class="r2">D11</span>,"入力値を確認")<span class="caret"></span></div>
    <div class="callout"></div>
    <svg class="badge" viewBox="0 0 46 46"><circle cx="23" cy="23" r="23" fill="#fff"/><circle cx="23" cy="23" r="19" fill="#fff" stroke="#f00" stroke-width="2"/><path d="M11 15q-3 8 0 16l6-8zM35 15q3 8 0 16l-6-8z" fill="#999"/><text x="23" y="35" text-anchor="middle" font-family="Liberation Sans, sans-serif" font-size="34" font-weight="700" fill="#f00" stroke="#fff" stroke-width="3" paint-order="stroke">8</text></svg>`
};

let html = '<colgroup><col class="c-row">' +
  letters.map(l => `<col class="${l in widths ? widths[l] : "c-72"}">`).join("") + "</colgroup>";
html += '<thead><tr><th class="corner" aria-label="すべて選択"><svg width="17" height="17"><path d="M17 0v17H0z" fill="#b4b4b4"/></svg></th>' +
  letters.map(l => `<th${l === "E" ? ' class="sel"' : ""}>${l}</th>`).join("") + "</tr></thead><tbody>";
for (let r = 1; r <= 31; r++) {
  html += `<tr><th${r === 11 ? ' class="sel"' : ""}>${r}</th>`;
  letters.forEach((l, i) => {
    const key = l + r;
    const row = records[r - 2];
    let cls = "";
    let text = "";
    if (r === 1 && heads[l]) { cls = "head"; text = heads[l]; }
    else if (row && i < 5) { cls = l === "B" ? "" : "num"; text = row[i]; }
    else if (key === "G2") { cls = "num"; text = "65,970"; }
    if (extras[key]) { cls += " rel"; text += extras[key]; }
    html += `<td${cls ? ` class="${cls}"` : ""}>${text}</td>`;
  });
  html += "</tr>";
}
document.getElementById("grid").innerHTML = html + "</tbody>";
```
